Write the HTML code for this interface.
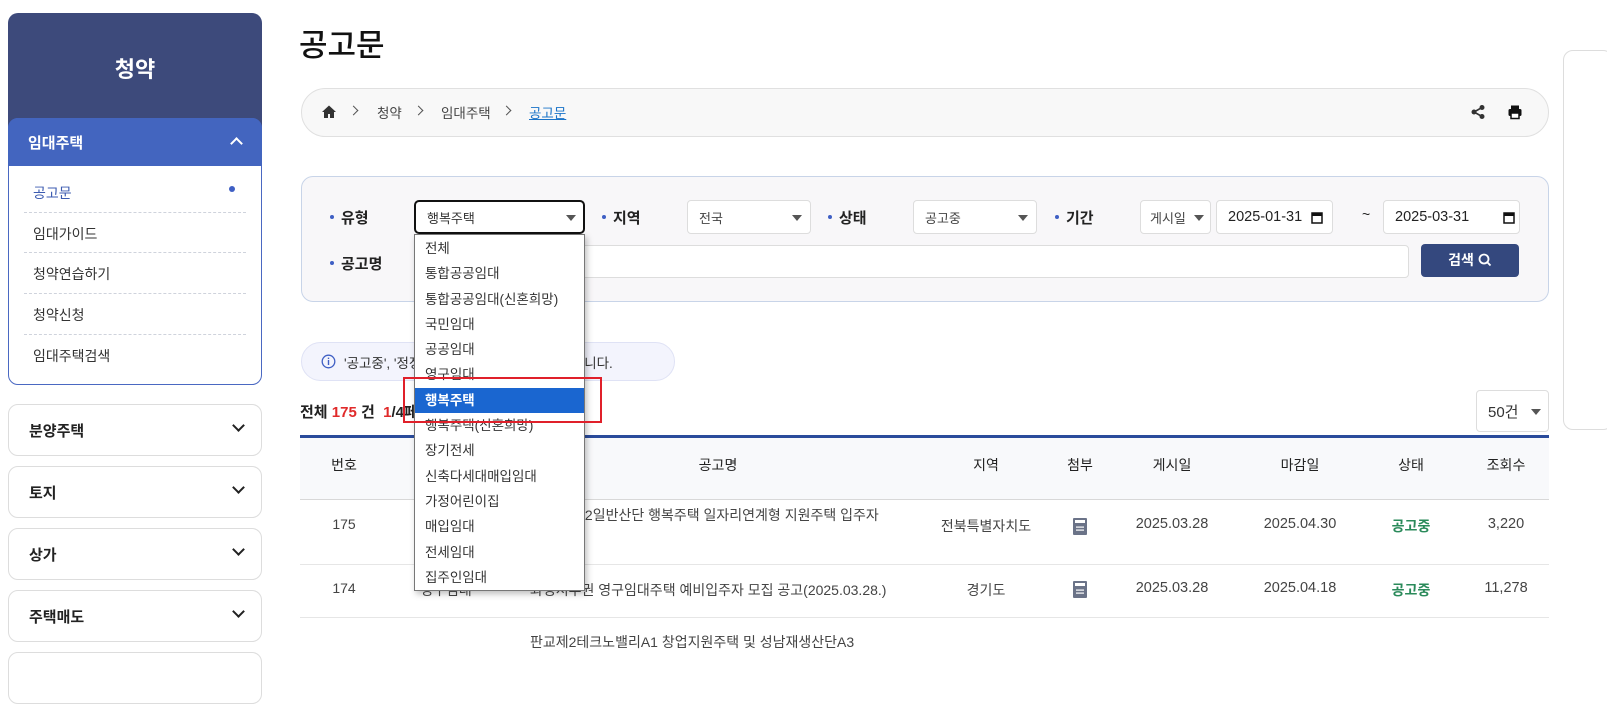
<!DOCTYPE html>
<html><head><meta charset="utf-8">
<style>
*{box-sizing:border-box;margin:0;padding:0}
body{width:1607px;height:660px;overflow:hidden;background:#fff;font-family:"Liberation Sans","Noto Sans CJK KR",sans-serif;color:#222;position:relative;font-size:14px}
.a{position:absolute}
.sel{position:absolute;background:#fff;border:1px solid #ddd;border-radius:4px;font-size:13px;color:#444;padding-left:11px;display:flex;align-items:center}
.tri{position:absolute;width:0;height:0;border-left:5px solid transparent;border-right:5px solid transparent;border-top:6px solid #555}
.lbl{position:absolute;font-size:15px;font-weight:bold;color:#222}
.lbl:before{content:"";display:inline-block;width:4px;height:4px;border-radius:50%;background:#3f5fc4;margin-right:7px;vertical-align:middle;position:relative;top:-2px}
.sub{position:absolute;left:33px;font-size:14px;color:#333}
.dash{position:absolute;left:24px;width:222px;border-top:1px dashed #cfd3dc}
.acc{position:absolute;left:8px;width:254px;height:52px;border:1px solid #ddd;border-radius:10px;background:#fff}
.acc span{position:absolute;left:20px;top:15px;font-size:15px;font-weight:bold;color:#222}
.chev{position:absolute;width:9px;height:9px;border-right:2px solid #222;border-bottom:2px solid #222;transform:rotate(45deg)}
.th{position:absolute;top:455px;font-size:14px;color:#222;transform:translateX(-50%)}
.td{position:absolute;font-size:14px;color:#444;transform:translateX(-50%)}
.dd div{height:25.3px;line-height:25.3px;padding-left:10px;font-size:13.5px;color:#333}
</style></head><body>

<!-- sidebar -->
<div class="a" style="left:8px;top:13px;width:254px;height:115px;background:#3d4a7b;border-radius:10px 10px 0 0"></div>
<div class="a" style="left:8px;top:52px;width:254px;text-align:center;color:#fff;font-size:22px;font-weight:bold">청약</div>
<div class="a" style="left:8px;top:118px;width:254px;height:267px;border:1px solid #4a68c2;border-radius:10px;background:#fff"></div>
<div class="a" style="left:8px;top:118px;width:254px;height:48px;background:#4365bf;border-radius:10px 10px 0 0"></div>
<div class="a" style="left:28px;top:132px;color:#fff;font-size:15px;font-weight:bold">임대주택</div>
<div class="chev" style="left:232px;top:139px;border-color:#fff;transform:rotate(-135deg)"></div>
<div class="sub" style="top:183px;color:#3c5bb0">공고문</div>
<div class="a" style="left:229px;top:186px;width:6px;height:6px;border-radius:50%;background:#3f5fc4"></div>
<div class="dash" style="top:212px"></div>
<div class="sub" style="top:224px">임대가이드</div>
<div class="dash" style="top:252px"></div>
<div class="sub" style="top:264px">청약연습하기</div>
<div class="dash" style="top:293px"></div>
<div class="sub" style="top:305px">청약신청</div>
<div class="dash" style="top:334px"></div>
<div class="sub" style="top:346px">임대주택검색</div>

<div class="acc" style="top:404px"><span>분양주택</span><div class="chev" style="left:225px;top:16px"></div></div>
<div class="acc" style="top:466px"><span>토지</span><div class="chev" style="left:225px;top:16px"></div></div>
<div class="acc" style="top:528px"><span>상가</span><div class="chev" style="left:225px;top:16px"></div></div>
<div class="acc" style="top:590px"><span>주택매도</span><div class="chev" style="left:225px;top:16px"></div></div>
<div class="acc" style="top:652px"></div>

<!-- title -->
<div class="a" style="left:299px;top:20px;font-size:31px;font-weight:500;color:#111">공고문</div>

<!-- breadcrumb -->
<div class="a" style="left:301px;top:88px;width:1248px;height:49px;background:#f8f8f8;border:1px solid #e0e0e0;border-radius:25px"></div>
<svg class="a" style="left:321px;top:104px" width="16" height="16" viewBox="0 0 16 16"><path d="M8 1.5L1 8h2v6h4v-4h2v4h4V8h2z" fill="#333"/></svg>
<div class="chev" style="left:350px;top:107px;width:7px;height:7px;border-width:1.5px;border-color:#555;transform:rotate(-45deg)"></div>
<div class="a" style="left:377px;top:102px;font-size:13.5px;color:#444">청약</div>
<div class="chev" style="left:415px;top:107px;width:7px;height:7px;border-width:1.5px;border-color:#555;transform:rotate(-45deg)"></div>
<div class="a" style="left:441px;top:102px;font-size:13.5px;color:#444">임대주택</div>
<div class="chev" style="left:503px;top:107px;width:7px;height:7px;border-width:1.5px;border-color:#555;transform:rotate(-45deg)"></div>
<div class="a" style="left:529px;top:102px;font-size:13.5px;color:#1a73c8;text-decoration:underline">공고문</div>
<svg class="a" style="left:1470px;top:104px" width="16" height="16" viewBox="0 0 16 16"><circle cx="12" cy="3.5" r="2.5" fill="#333"/><circle cx="4" cy="8" r="2.5" fill="#333"/><circle cx="12" cy="12.5" r="2.5" fill="#333"/><path d="M12 3.5L4 8l8 4.5" stroke="#333" stroke-width="1.6" fill="none"/></svg>
<svg class="a" style="left:1507px;top:104px" width="16" height="16" viewBox="0 0 16 16"><rect x="4" y="1.5" width="8" height="4" fill="#111"/><rect x="1.5" y="5" width="13" height="7" rx="1.5" fill="#111"/><rect x="4" y="9" width="8" height="5.5" fill="#fff" stroke="#111" stroke-width="1.5"/></svg>

<!-- search box -->
<div class="a" style="left:301px;top:176px;width:1248px;height:126px;background:#f8f7f9;border:1px solid #c8d4e8;border-radius:12px"></div>
<div class="lbl" style="left:330px;top:207px">유형</div>
<div class="sel" style="left:414px;top:200px;width:171px;height:34px;border:2px solid #111;border-radius:5px;color:#333">행복주택<div class="tri" style="right:7px;top:13px"></div></div>
<div class="lbl" style="left:602px;top:207px">지역</div>
<div class="sel" style="left:687px;top:200px;width:124px;height:34px">전국<div class="tri" style="right:8px;top:14px"></div></div>
<div class="lbl" style="left:828px;top:207px">상태</div>
<div class="sel" style="left:913px;top:200px;width:124px;height:34px">공고중<div class="tri" style="right:8px;top:14px"></div></div>
<div class="lbl" style="left:1055px;top:207px">기간</div>
<div class="sel" style="left:1140px;top:200px;width:71px;height:34px;padding-left:9px">게시일<div class="tri" style="right:6px;top:14px"></div></div>
<div class="sel" style="left:1216px;top:200px;width:117px;height:34px;font-size:14.5px;color:#222">2025-01-31<svg class="a" style="right:9px;top:10px" width="12" height="13" viewBox="0 0 12 13"><rect x="1" y="2" width="10" height="10" fill="none" stroke="#111" stroke-width="1.5"/><rect x="1" y="2" width="10" height="3" fill="#111"/></svg></div>
<div class="a" style="left:1362px;top:206px;font-size:14px">~</div>
<div class="sel" style="left:1383px;top:200px;width:137px;height:34px;font-size:14.5px;color:#222">2025-03-31<svg class="a" style="right:4px;top:10px" width="12" height="13" viewBox="0 0 12 13"><rect x="1" y="2" width="10" height="10" fill="none" stroke="#111" stroke-width="1.5"/><rect x="1" y="2" width="10" height="3" fill="#111"/></svg></div>
<div class="lbl" style="left:330px;top:253px">공고명</div>
<div class="sel" style="left:414px;top:245px;width:995px;height:33px;color:#1a6ab8;font-size:14px">공고명을 입력하세요.</div>
<div class="a" style="left:1421px;top:244px;width:98px;height:33px;background:#34487e;border-radius:4px;color:#fff;font-size:14px;font-weight:bold;text-align:center;line-height:33px">검색 <svg style="vertical-align:-2px" width="14" height="14" viewBox="0 0 14 14"><circle cx="6" cy="6" r="4.5" fill="none" stroke="#fff" stroke-width="1.8"/><path d="M9.3 9.3L12.5 12.5" stroke="#fff" stroke-width="1.8"/></svg></div>

<!-- info pill -->
<div class="a" style="left:301px;top:342px;width:374px;height:39px;background:#f3f4fd;border:1px solid #dfe2f5;border-radius:20px"></div>
<svg class="a" style="left:321px;top:354px" width="15" height="15" viewBox="0 0 15 15"><circle cx="7.5" cy="7.5" r="6.3" fill="none" stroke="#3f5fc4" stroke-width="1.3"/><rect x="6.8" y="6" width="1.4" height="5" fill="#3f5fc4"/><rect x="6.8" y="3.6" width="1.4" height="1.4" fill="#3f5fc4"/></svg>
<div class="a" style="left:344px;top:352px;font-size:13.5px;color:#333">'공고중', '정정공고중' 상태의 공고만 조회됩니다.</div>

<!-- count -->
<div class="a" style="left:300px;top:401px;font-size:15px;font-weight:bold;color:#222">전체 <span style="color:#e02a2a">175</span> 건 &nbsp;<span style="color:#e02a2a">1</span>/4페이지</div>
<div class="sel" style="left:1476px;top:390px;width:73px;height:42px;font-size:15px;color:#333">50건<div class="tri" style="right:7px;top:18px"></div></div>

<!-- table -->
<div class="a" style="left:300px;top:435px;width:1249px;height:3px;background:#2a4b9b"></div>
<div class="a" style="left:300px;top:438px;width:1249px;height:62px;background:#f8f9fb;border-bottom:1px solid #d8d8d8"></div>
<div class="th" style="left:344px">번호</div>
<div class="th" style="left:460px">유형</div>
<div class="th" style="left:718px">공고명</div>
<div class="th" style="left:986px">지역</div>
<div class="th" style="left:1080px">첨부</div>
<div class="th" style="left:1172px">게시일</div>
<div class="th" style="left:1300px">마감일</div>
<div class="th" style="left:1411px">상태</div>
<div class="th" style="left:1506px">조회수</div>

<div class="a" style="left:300px;top:564px;width:1249px;border-top:1px solid #e6e6e6"></div>
<div class="a" style="left:300px;top:617px;width:1249px;border-top:1px solid #e6e6e6"></div>

<div class="td" style="left:344px;top:516px">175</div>
<div class="td" style="left:460px;top:516px">행복주택</div>
<div class="a" style="left:478px;top:505px;font-size:14px;color:#444">완주테크노밸리 제2일반산단 행복주택 일자리연계형 지원주택 입주자</div>
<div class="td" style="left:986px;top:516px">전북특별자치도</div>
<svg class="a" style="left:1073px;top:518px" width="14" height="17" viewBox="0 0 14 17"><rect width="14" height="17" rx="1" fill="#6b7388"/><rect x="2" y="2" width="10" height="3" fill="#fff"/><rect x="3" y="8.5" width="8" height="1.2" fill="#fff"/><rect x="3" y="11.5" width="8" height="1.2" fill="#fff"/></svg>
<div class="td" style="left:1172px;top:516px;font-size:14.5px">2025.03.28</div>
<div class="td" style="left:1300px;top:516px;font-size:14.5px">2025.04.30</div>
<div class="td" style="left:1411px;top:516px;color:#2a8a5a;font-weight:bold">공고중</div>
<div class="td" style="left:1506px;top:516px;font-size:14.5px">3,220</div>

<div class="td" style="left:344px;top:580px">174</div>
<div class="td" style="left:446px;top:580px">영구임대</div>
<div class="a" style="left:530px;top:580px;font-size:14px;color:#444">화성서부권 영구임대주택 예비입주자 모집 공고(2025.03.28.)</div>
<div class="td" style="left:986px;top:580px">경기도</div>
<svg class="a" style="left:1073px;top:581px" width="14" height="17" viewBox="0 0 14 17"><rect width="14" height="17" rx="1" fill="#6b7388"/><rect x="2" y="2" width="10" height="3" fill="#fff"/><rect x="3" y="8.5" width="8" height="1.2" fill="#fff"/><rect x="3" y="11.5" width="8" height="1.2" fill="#fff"/></svg>
<div class="td" style="left:1172px;top:580px;font-size:14.5px">2025.03.28</div>
<div class="td" style="left:1300px;top:580px;font-size:14.5px">2025.04.18</div>
<div class="td" style="left:1411px;top:580px;color:#2a8a5a;font-weight:bold">공고중</div>
<div class="td" style="left:1506px;top:580px;font-size:14.5px">11,278</div>
<div class="a" style="left:530px;top:632px;font-size:14px;color:#444">판교제2테크노밸리A1 창업지원주택 및 성남재생산단A3</div>

<!-- scrollbar edge -->
<div class="a" style="left:1563px;top:50px;width:50px;height:380px;border:1px solid #ddd;border-radius:10px;background:#fff"></div>

<!-- dropdown -->
<div class="a dd" style="left:414px;top:234px;width:171px;height:357px;background:#fff;border:1px solid #777;box-shadow:2px 3px 6px rgba(0,0,0,.25);padding-top:1px">
<div>전체</div><div>통합공공임대</div><div>통합공공임대(신혼희망)</div><div>국민임대</div><div>공공임대</div><div>영구임대</div>
<div style="background:#1a66d0;color:#fff;font-weight:bold">행복주택</div>
<div>행복주택(신혼희망)</div><div>장기전세</div><div>신축다세대매입임대</div><div>가정어린이집</div><div>매입임대</div><div>전세임대</div><div>집주인임대</div>
</div>
<div class="a" style="left:403px;top:377px;width:199px;height:46px;border:2px solid #e0202a"></div>
</body></html>
